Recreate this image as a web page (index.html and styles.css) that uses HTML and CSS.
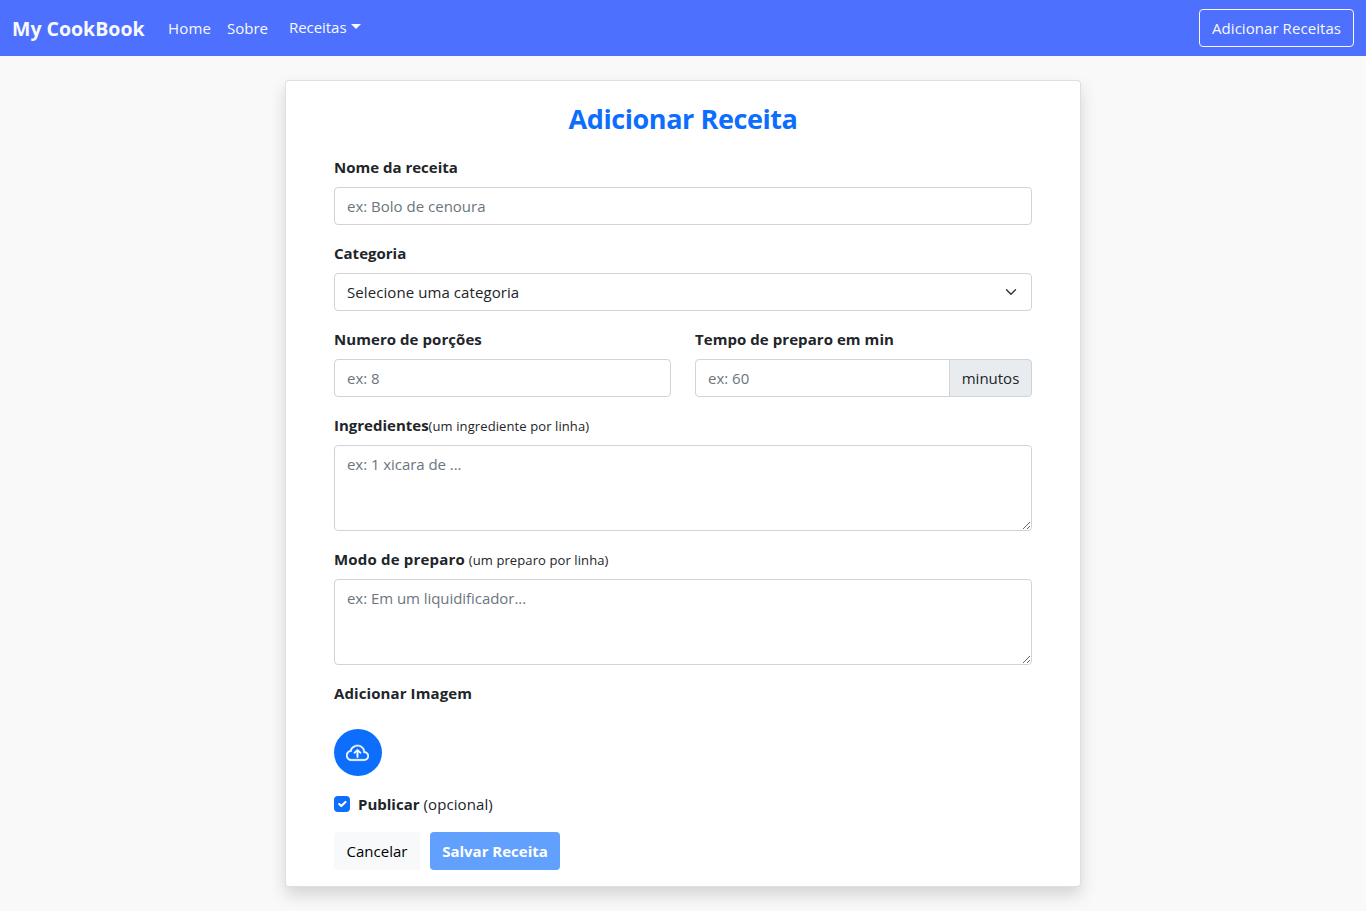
FILE: index.html
```html
<!DOCTYPE html>
<html lang="pt-BR">
<head>
<meta charset="utf-8">
<title>My CookBook</title>
<link rel="stylesheet" href="styles.css">
</head>
<body>
<nav class="navbar">
  <a class="brand">My CookBook</a>
  <a class="nav-link home">Home</a>
  <a class="nav-link sobre">Sobre</a>
  <a class="nav-link dropdown">Receitas<span class="caret"></span></a>
  <a class="btn-outline"><span>Adicionar Receitas</span></a>
</nav>
<main class="card">
  <h1 class="title"><span>Adicionar Receita</span></h1>
  <form class="form">
    <div class="field">
      <label class="label"><b>Nome da receita</b></label>
      <input class="control" type="text" placeholder="ex: Bolo de cenoura">
    </div>
    <div class="field">
      <label class="label"><b>Categoria</b></label>
      <select class="control select"><option>Selecione uma categoria</option></select>
    </div>
    <div class="row">
      <div class="field">
        <label class="label"><b class="l-num">Numero de porções</b></label>
        <input class="control" type="text" placeholder="ex: 8">
      </div>
      <div class="field">
        <label class="label"><b class="l-tempo">Tempo de preparo em min</b></label>
        <div class="group">
          <input class="control" type="text" placeholder="ex: 60">
          <span class="addon">minutos</span>
        </div>
      </div>
    </div>
    <div class="field">
      <label class="label"><b>Ingredientes</b><small>(um ingrediente por linha)</small></label>
      <textarea class="control area p-ing" placeholder="ex: 1 xicara de ..."></textarea>
    </div>
    <div class="field">
      <label class="label"><b class="l-modo">Modo de preparo</b> <small>(um preparo por linha)</small></label>
      <textarea class="control area p-modo" placeholder="ex: Em um liquidificador..."></textarea>
    </div>
    <div class="label"><b class="l-img">Adicionar Imagem</b></div>
    <div class="upload">
      <svg width="23" height="23" viewBox="0 0 16 16" fill="#fff" stroke="#fff" stroke-width=".3"><path fill-rule="evenodd" d="M7.646 5.146a.5.5 0 0 1 .708 0l2 2a.5.5 0 0 1-.708.708L8.5 6.707V10.5a.5.5 0 0 1-1 0V6.707L6.354 7.854a.5.5 0 1 1-.708-.708l2-2z"/><path d="M4.406 3.342A5.53 5.53 0 0 1 8 2c2.69 0 4.923 2 5.166 4.579C14.758 6.804 16 8.137 16 9.773 16 11.569 14.502 13 12.687 13H3.781C1.708 13 0 11.366 0 9.318c0-1.763 1.266-3.223 2.942-3.593.143-.863.698-1.723 1.464-2.383zm.653.757c-.757.653-1.153 1.44-1.153 2.056v.448l-.445.049C2.064 6.805 1 7.952 1 9.318 1 10.785 2.23 12 3.781 12h8.906C13.98 12 15 10.988 15 9.773c0-1.216-1.02-2.228-2.313-2.228h-.5v-.5C12.188 4.825 10.328 3 8 3a4.53 4.53 0 0 0-2.941 1.1z"/></svg>
    </div>
    <div class="check">
      <span class="box"><svg width="14" height="14" viewBox="0 0 20 20"><path fill="none" stroke="#fff" stroke-linecap="round" stroke-linejoin="round" stroke-width="3" d="m6 10 3 3 6-6"/></svg></span>
      <b>Publicar</b><span class="opt">(opcional)</span>
    </div>
    <div class="actions">
      <button class="btn cancel" type="button"><span>Cancelar</span></button>
      <button class="btn save" type="button"><span>Salvar Receita</span></button>
    </div>
  </form>
</main>
</body>
</html>
```
FILE: styles.css
```css
*{box-sizing:border-box}
body{margin:0;height:911px;overflow:hidden;background:#f9f9f9;color:#212529;font-family:"Open Sans","Noto Sans",sans-serif;font-size:15px;line-height:24px}
.navbar{height:56px;display:flex;align-items:center;padding:0 12px;background:#4d70ff;color:#f8f9fa}
.brand{font-size:19.5px;font-weight:700;line-height:30px;width:156px;padding-top:1px;white-space:nowrap}
.nav-link{white-space:nowrap}
.home{width:59px;letter-spacing:.15px}
.sobre{width:62px}
.dropdown{display:flex;align-items:center;padding-bottom:2px;letter-spacing:-.05px}
.caret{margin-left:4px;border-top:5px solid;border-left:5px solid transparent;border-right:5px solid transparent;margin-bottom:2px}
.btn-outline{margin-left:auto;width:155px;height:38px;border:1px solid #f8f9fa;border-radius:4px;display:flex;align-items:center;justify-content:center;white-space:nowrap;letter-spacing:.06px}
.card{width:796px;height:807px;margin:24px auto 0;background:#fff;border:1px solid rgba(0,0,0,.125);border-radius:4px;box-shadow:0 8px 16px rgba(0,0,0,.15);padding:21px 48px 0}
.title{margin:0 0 19px;font-size:27px;line-height:34px;font-weight:700;letter-spacing:-.42px;color:#0d6efd;text-align:center;white-space:nowrap}
.form{display:flex;flex-direction:column}
.field{display:flex;flex-direction:column;margin-bottom:16px;min-width:0}
.label{display:block;height:24px;margin-bottom:8px;white-space:nowrap}
.label small{font-size:13px;letter-spacing:.1px}
.l-num,.l-tempo{letter-spacing:.06px}
.l-modo{letter-spacing:.18px}
.l-img{letter-spacing:.1px}
.control{width:100%;height:38px;padding:6px 12px;border:1px solid #ced4da;border-radius:4px;background-color:#fff;font:inherit;color:#212529;outline:0;margin:0;display:block}
.control::placeholder{color:#6c757d;opacity:1}
.p-ing,.p-modo{letter-spacing:-.05px}
.select{appearance:none;letter-spacing:.08px;background-image:url("data:image/svg+xml,%3csvg xmlns='http://www.w3.org/2000/svg' viewBox='0 0 16 16'%3e%3cpath fill='none' stroke='%23343a40' stroke-linecap='round' stroke-linejoin='round' stroke-width='2' d='m2 5 6 6 6-6'/%3e%3c/svg%3e");background-repeat:no-repeat;background-position:right 14px center;background-size:12px 12px}
.area{height:86px;resize:vertical}
.row{display:grid;grid-template-columns:1fr 1fr;gap:24px}
.group{display:flex}
.group .control{flex:1;min-width:0;border-radius:4px 0 0 4px}
.addon{width:83px;height:38px;margin-left:-1px;border:1px solid #ced4da;border-radius:0 4px 4px 0;background:#e9ecef;display:flex;align-items:center;justify-content:center}
.upload{width:48px;height:47px;margin-top:16px;padding:1px 1px 0 0;border-radius:50%;background:#0d6efd;display:flex;align-items:center;justify-content:center}
.check{display:flex;align-items:center;height:24px;margin:16px 0}
.box{width:16px;height:16px;border-radius:4px;background:#0d6efd;margin-right:8px;display:flex;align-items:center;justify-content:center}
.opt{margin-left:4px;letter-spacing:.1px}
.actions{display:flex;gap:10px}
.btn{height:38px;border:0;border-radius:4px;font:inherit;padding:0;white-space:nowrap}
.cancel{width:86px;background:#f8f9fa;color:#000}
.save{width:130px;background:#0d6efd;color:#fff;font-weight:700;opacity:.65}
```
